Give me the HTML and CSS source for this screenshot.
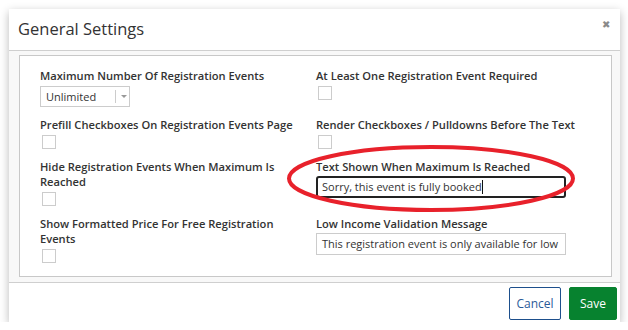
FILE: index.html
```html
<!DOCTYPE html>
<html>
<head>
<meta charset="utf-8">
<link rel="stylesheet" href="styles.css">
</head>
<body>
<div class="modal">
  <div class="header">
    <h1 class="title">General Settings</h1>
    <span class="close">&#x2716;</span>
  </div>
  <div class="body">
    <div class="panel">
      <div class="field">
        <div class="label">Maximum Number Of Registration Events</div>
        <div class="select"><span class="select-text">Unlimited</span><span class="select-arrow"></span></div>
      </div>
      <div class="field">
        <div class="label">At Least One Registration Event Required</div>
        <div class="checkbox"></div>
      </div>
      <div class="field">
        <div class="label">Prefill Checkboxes On Registration Events Page</div>
        <div class="checkbox"></div>
      </div>
      <div class="field">
        <div class="label">Render Checkboxes / Pulldowns Before The Text</div>
        <div class="checkbox"></div>
      </div>
      <div class="field">
        <div class="label">Hide Registration Events When Maximum Is Reached</div>
        <div class="checkbox"></div>
      </div>
      <div class="field">
        <div class="label">Text Shown When Maximum Is Reached</div>
        <div class="input focused">Sorry, this event is fully booked<span class="caret"></span></div>
      </div>
      <div class="field">
        <div class="label">Show Formatted Price For Free Registration Events</div>
        <div class="checkbox"></div>
      </div>
      <div class="field">
        <div class="label">Low Income Validation Message</div>
        <div class="input">This registration event is only available for low</div>
      </div>
    </div>
  </div>
  <div class="footer">
    <button class="btn btn-cancel">Cancel</button>
    <button class="btn btn-save">Save</button>
  </div>
</div>
<svg class="annotation" width="628" height="330" viewBox="0 0 628 330">
  <ellipse cx="431" cy="178.5" rx="142" ry="31.5" fill="none" stroke="#e8212b" stroke-width="4"/>
</svg>
</body>
</html>
```
FILE: styles.css
```css
* { box-sizing: border-box; }
html, body {
  margin: 0;
  padding: 0;
  background: #ffffff;
  font-family: "Open Sans", "Noto Sans", sans-serif;
  color: #333333;
}
.modal {
  margin: 9px 0 0 9px;
  width: 611px;
  height: 313px;
  background: #ffffff;
  box-shadow: 0 3px 9px rgba(0, 0, 0, 0.28);
  display: flex;
  flex-direction: column;
  position: relative;
}
.header {
  height: 42px;
  border-bottom: 1px solid #cfcfcf;
  display: flex;
  align-items: flex-start;
  justify-content: space-between;
  padding: 0 9px;
  flex: none;
}
.title {
  margin: 0;
  font-size: 16.5px;
  font-weight: 400;
  line-height: 22px;
  padding-top: 9px;
  color: #333333;
}
.close {
  font-size: 10px;
  color: #8a8a8a;
  line-height: 10px;
  padding-top: 10px;
  margin-right: 1px;
}
.body {
  background: #f8f8f8;
  padding: 4px 8px 5px 10px;
  flex: none;
}
.panel {
  background: #ffffff;
  border: 1px solid #c8c8c8;
  padding: 12px 20px 13px 20px;
  display: grid;
  grid-template-columns: 256px 1fr;
  column-gap: 20px;
  row-gap: 10px;
  align-items: start;
}
.label {
  font-size: 11.15px;
  font-weight: 600;
  line-height: 15px;
  color: #333333;
}
.checkbox {
  width: 14px;
  height: 14px;
  border: 1px solid #cccccc;
  background: #ffffff;
  margin: 3px 0 0 2px;
}
.select {
  margin-top: 3px;
  width: 90px;
  height: 21px;
  border: 1px solid #cccccc;
  display: flex;
  align-items: center;
  font-size: 11px;
  color: #333333;
}
.select-text {
  width: 75px;
  padding-left: 5px;
  border-right: 1px solid #cccccc;
  height: 13px;
  line-height: 13px;
}
.select-arrow {
  width: 0;
  height: 0;
  border-left: 3px solid transparent;
  border-right: 3px solid transparent;
  border-top: 3px solid #999999;
  margin-left: 5px;
}
.input {
  margin-top: 2px;
  width: 250px;
  height: 22px;
  border: 1px solid #cccccc;
  font-size: 11px;
  line-height: 20px;
  padding-left: 5px;
  white-space: nowrap;
  overflow: hidden;
  color: #333333;
}
.input.focused {
  border: 2px solid #222222;
  border-radius: 3px;
  line-height: 18px;
  padding-left: 4px;
}
.caret {
  display: inline-block;
  width: 1px;
  height: 14px;
  background: #111111;
  vertical-align: -3px;
}
.footer {
  flex: 1;
  border-top: 1px solid #cfcfcf;
  display: flex;
  justify-content: flex-end;
  align-items: flex-start;
  gap: 8px;
  padding: 4px 3px 0 0;
}
.btn {
  height: 33px;
  font-family: "Open Sans", "Noto Sans", sans-serif;
  font-size: 12px;
  border-radius: 2px;
  padding: 0;
  cursor: pointer;
}
.btn-cancel {
  width: 52px;
  background: #ffffff;
  border: 1px solid #1d4f8c;
  color: #2a5a98;
}
.btn-save {
  width: 48px;
  background: #07822f;
  border: 1px solid #07822f;
  color: #ffffff;
}
.annotation {
  position: absolute;
  left: 0;
  top: 0;
  pointer-events: none;
}
```
